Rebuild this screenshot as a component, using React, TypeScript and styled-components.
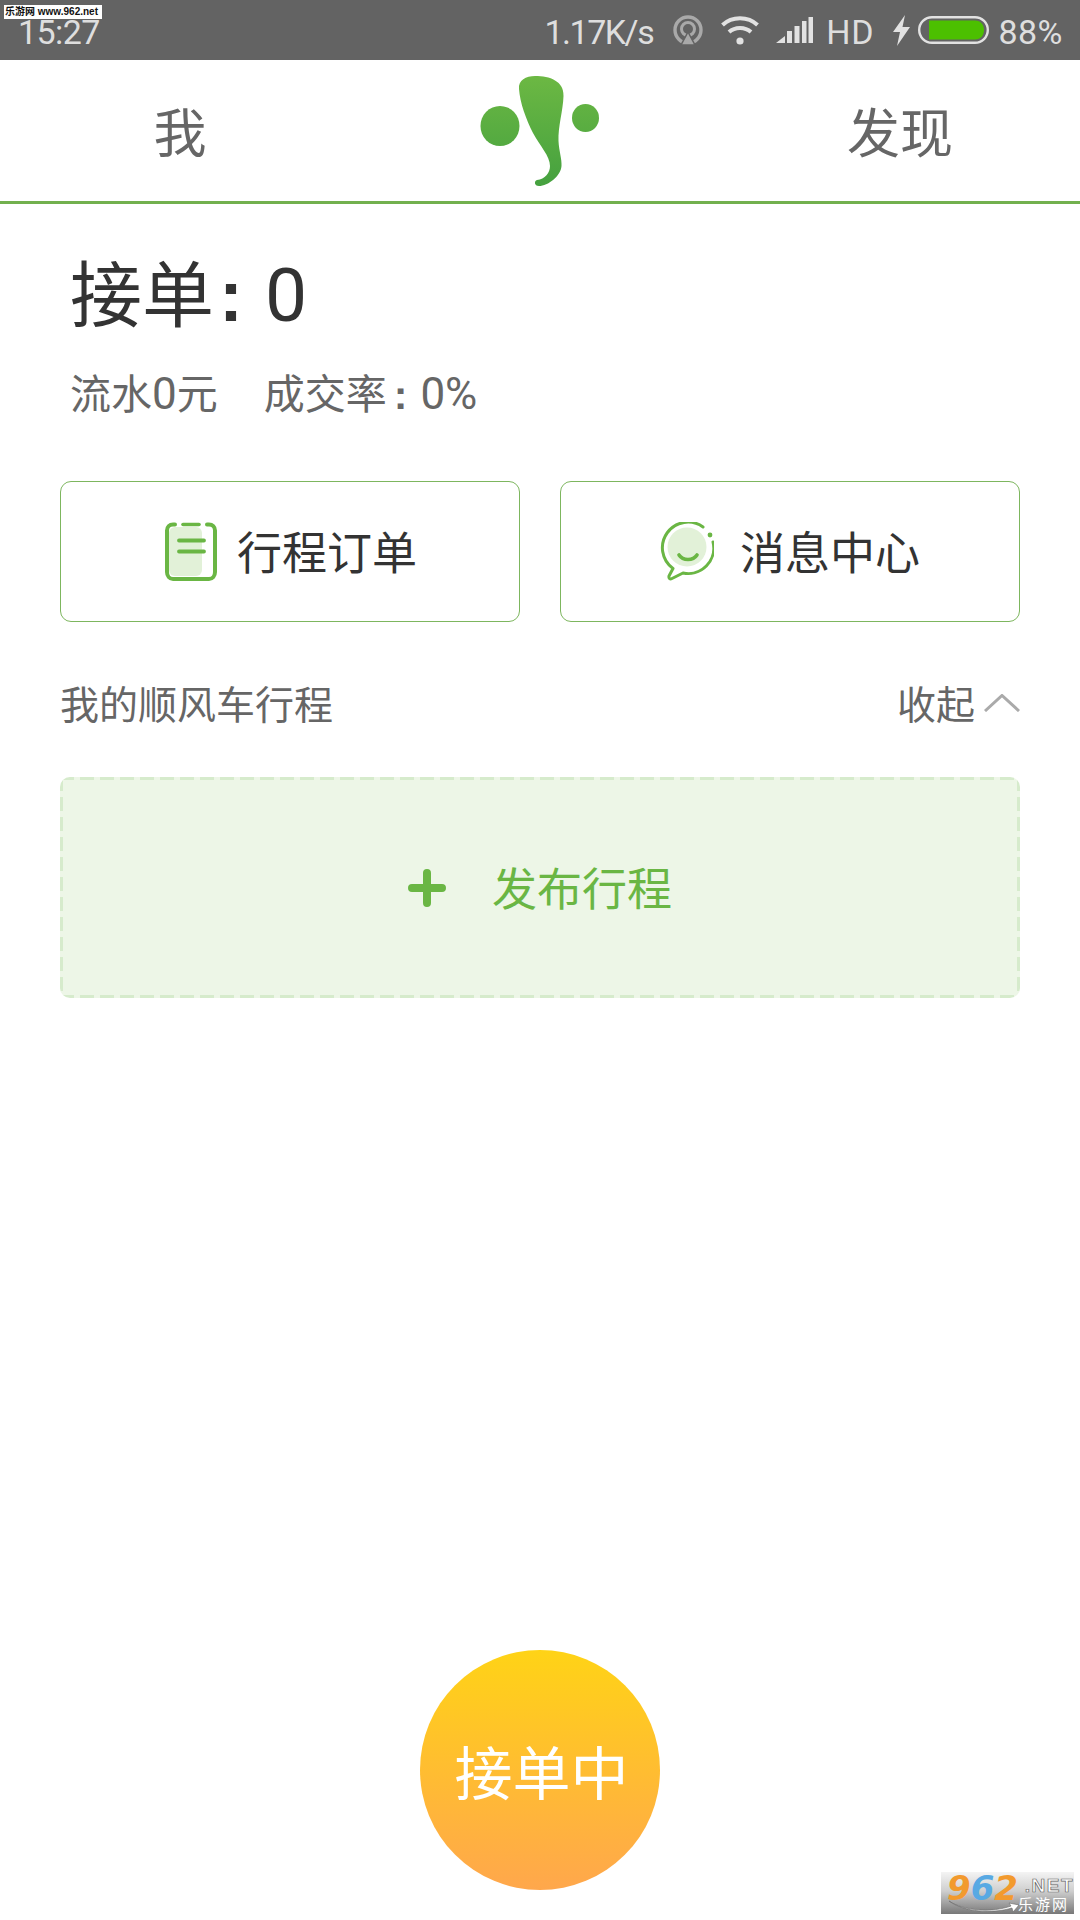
import React from "react";
import styled, { createGlobalStyle } from "styled-components";

const FONT = `Roboto, "Noto Sans CJK SC", sans-serif`;
const DASH = "#d6ebcc";

const Global = createGlobalStyle`
  html, body { margin: 0; padding: 0; background: #fff; }
  #root { width: 1080px; height: 1920px; }
  * { box-sizing: border-box; }
`;

const Page = styled.div`
  position: relative;
  width: 1080px;
  height: 1920px;
  display: flex;
  flex-direction: column;
  font-family: ${FONT};
  background: #fff;
  overflow: hidden;
`;

const StatusBar = styled.div`
  height: 60px;
  background: #636363;
  display: flex;
  align-items: center;
  padding: 0 17px 0 18px;
  color: #dedede;
  font-size: 34px;
`;
const StatusTime = styled.span`
  line-height: 60px;
  margin-top: 4px;
  letter-spacing: -0.6px;
`;
const StatusRight = styled.div`
  margin-left: auto;
  display: flex;
  align-items: center;
  height: 60px;
`;
const StatusText = styled.span<{ $gap?: number; $track?: number }>`
  margin-left: ${(p) => p.$gap ?? 0}px;
  letter-spacing: ${(p) => p.$track ?? 0}px;
  line-height: 60px;
  margin-top: 4px;
`;
const StatusIcon = styled.svg<{ $gap: number }>`
  display: block;
  margin-left: ${(p) => p.$gap}px;
  flex: none;
`;

const SiteStamp = styled.div`
  position: absolute;
  left: 4px;
  top: 5px;
  width: 98px;
  height: 14px;
  background: #fff;
  color: #111;
  font-size: 10px;
  line-height: 14px;
  padding-left: 1px;
  white-space: nowrap;
  font-family: "Liberation Sans", "Noto Sans CJK SC", sans-serif;
  font-weight: 700;
`;

const Header = styled.header`
  height: 144px;
  display: grid;
  grid-template-columns: 360px 360px 360px;
  align-items: center;
  border-bottom: 3px solid #72b04e;
`;
const Tab = styled.div`
  text-align: center;
  font-size: 53px;
  line-height: 131px;
  padding-top: 10px;
  color: #666;
`;
const Logo = styled.svg`
  display: block;
  margin: 0 auto;
`;

const Stats = styled.section`
  padding: 0 70px;
`;
const Orders = styled.div`
  margin-top: 41px;
  height: 100px;
  display: flex;
  align-items: baseline;
  font-size: 72px;
  line-height: 100px;
  color: #333;
`;
const Colon = styled.span<{ $before: number; $after: number }>`
  font-family: "Liberation Sans", sans-serif;
  font-weight: 700;
  margin-left: ${(p) => p.$before}px;
  margin-right: ${(p) => p.$after}px;
`;
const BigZero = styled.span`
  font-size: 75px;
`;
const Sub = styled.div`
  margin-top: 24px;
  height: 50px;
  display: flex;
  align-items: baseline;
  font-size: 41px;
  line-height: 50px;
  color: #666;
`;
const Num = styled.span`
  font-size: 44px;
`;
const SubItem = styled.span<{ $gap?: number }>`
  display: flex;
  align-items: baseline;
  margin-left: ${(p) => p.$gap ?? 0}px;
`;

const Actions = styled.div`
  margin-top: 62px;
  padding: 0 60px;
  display: grid;
  grid-template-columns: 460px 460px;
  gap: 40px;
`;
const ActionCard = styled.div<{ $gap: number }>`
  height: 141px;
  border: 1.5px solid #7db65e;
  border-radius: 11px;
  display: flex;
  align-items: center;
  justify-content: center;
  gap: ${(p) => p.$gap}px;
  font-size: 45px;
  color: #333;
`;
const Label = styled.span`
  margin-bottom: 2px;
`;

const SectionHead = styled.div`
  margin-top: 56px;
  padding: 0 60px;
  height: 50px;
  display: flex;
  align-items: center;
  font-size: 39px;
  color: #666;
`;
const Collapse = styled.div`
  margin-left: auto;
  display: flex;
  align-items: center;
  gap: 9px;
`;

const Publish = styled.div`
  margin: 49px 60px 0;
  height: 221px;
  border-radius: 10px;
  background:
    repeating-linear-gradient(90deg, ${DASH} 0 14px, transparent 14px 20px) top / 100% 3px no-repeat,
    repeating-linear-gradient(90deg, ${DASH} 0 14px, transparent 14px 20px) bottom / 100% 3px no-repeat,
    repeating-linear-gradient(180deg, ${DASH} 0 14px, transparent 14px 20px) left / 3px 100% no-repeat,
    repeating-linear-gradient(180deg, ${DASH} 0 14px, transparent 14px 20px) right / 3px 100% no-repeat,
    #edf6e7;
  display: flex;
  align-items: center;
  justify-content: center;
  gap: 46px;
  font-size: 45px;
  color: #6ab644;
`;

const Bottom = styled.div`
  margin-top: auto;
  padding-bottom: 30px;
  display: flex;
  justify-content: center;
`;
const GoButton = styled.div`
  width: 240px;
  height: 240px;
  padding-left: 3px;
  border-radius: 50%;
  background: linear-gradient(180deg, #ffd316 0%, #ffa74c 100%);
  color: #fff;
  font-size: 58px;
  display: flex;
  align-items: center;
  justify-content: center;
`;

const Badge = styled.div`
  position: absolute;
  right: 6px;
  bottom: 6px;
  width: 133px;
  height: 42px;
  background: linear-gradient(180deg, #f4f4f4 0%, #cfcfcf 45%, #787878 100%);
`;
const BadgeNum = styled.span`
  position: absolute;
  left: 6px;
  top: 0;
  font-family: "DejaVu Sans", sans-serif;
  font-style: italic;
  font-weight: 700;
  font-size: 34px;
  line-height: 32px;
  color: #f29a2e;
`;
const BadgeBlue = styled.span`
  color: #58a9e3;
`;
const BadgeNet = styled.span`
  position: absolute;
  right: 0;
  top: 4px;
  font-family: "Liberation Sans", sans-serif;
  font-weight: 700;
  font-size: 19px;
  line-height: 20px;
  color: #fff;
  letter-spacing: 1.5px;
  -webkit-text-stroke: 0.7px #666;
`;
const BadgeCn = styled.span`
  position: absolute;
  right: 5px;
  bottom: 0;
  font-size: 15px;
  line-height: 18px;
  color: #fff;
  letter-spacing: 2px;
`;
const BadgeWave = styled.svg`
  position: absolute;
  left: 7px;
  bottom: 1px;
`;

const GREEN = "#6ab644";

const CastIcon = () => (
  <StatusIcon $gap={20} width="30" height="30" viewBox="0 0 30 30" fill="none">
    <circle cx="15" cy="15" r="13" stroke="#a9a9a9" strokeWidth="3.4" />
    <circle cx="15" cy="14" r="6.5" stroke="#a9a9a9" strokeWidth="3" />
    <path d="M15 17L22 30H8Z" fill="#a9a9a9" stroke="#636363" strokeWidth="1.5" />
  </StatusIcon>
);
const WifiIcon = () => (
  <StatusIcon $gap={18} width="38" height="30" viewBox="0 0 38 30" fill="none">
    <path d="M1.5 10C11 1 27 1 36.5 10" stroke="#e2e2e2" strokeWidth="4" />
    <path d="M8 17C14 11.5 24 11.5 30 17" stroke="#e2e2e2" strokeWidth="4" />
    <circle cx="19" cy="26" r="3.6" fill="#e2e2e2" />
  </StatusIcon>
);
const SignalIcon = () => (
  <StatusIcon $gap={17} width="37" height="28" viewBox="0 0 37 28" fill="#e2e2e2">
    <path d="M0 27L9 20V27Z" />
    <rect x="11" y="15" width="5" height="12" />
    <rect x="18.5" y="10" width="5" height="17" />
    <rect x="26" y="5" width="4.5" height="22" />
    <rect x="32.5" y="1" width="4.5" height="26" />
  </StatusIcon>
);
const BoltIcon = () => (
  <StatusIcon $gap={19} width="17" height="31" viewBox="0 0 17 31" fill="#e2e2e2">
    <path d="M12 0L0 17H7L4 31L17 12H9.5Z" />
  </StatusIcon>
);
const BatteryIcon = () => (
  <StatusIcon $gap={8} width="71" height="28" viewBox="0 0 71 28" fill="none">
    <rect x="1.2" y="1.2" width="68.6" height="25.6" rx="12.8" stroke="#e2e2e2" strokeWidth="2.4" />
    <path d="M11 4.5H57C63 4.5 66 9 66 14C66 19 63 23.5 57 23.5H11Z" fill="#4cc000" />
  </StatusIcon>
);

const LogoMark = () => (
  <Logo width="120" height="116" viewBox="480 72 120 116">
    <defs>
      <linearGradient id="logoGrad" gradientUnits="userSpaceOnUse" x1="0" y1="75" x2="0" y2="185">
        <stop offset="0" stopColor="#6cb843" />
        <stop offset="1" stopColor="#45a13f" />
      </linearGradient>
    </defs>
    <ellipse cx="500" cy="125" rx="19.5" ry="20" fill="url(#logoGrad)" />
    <ellipse cx="585.5" cy="117" rx="13.5" ry="14" fill="url(#logoGrad)" />
    <path
      d="M519 88C518 79 526 75 535 75C550 75 564 80 563.5 95C563 110 558 125 558.5 140C559 150 562 158 561.5 165C561 175 548 185 539 185C534 185 534 180 537 179C545 178 550 172 550 165C550 155 540 145 533 132C526 118 520 102 519 88Z"
      fill="url(#logoGrad)"
    />
  </Logo>
);

const OrderIcon = () => (
  <svg width="54" height="60" viewBox="-2 0 54 60" fill="none">
    <rect x="4" y="5" width="33" height="49" rx="6" fill="#e2f1d8" />
    <path
      d="M10 2.5H8C4.5 2.5 2 5 2 8.5V50C2 54 4.5 57 8 57H44C47.5 57 50 54 50 50V8.5C50 5 47.5 2.5 44 2.5H42"
      stroke={GREEN}
      strokeWidth="4"
      strokeLinecap="round"
    />
    <path d="M18 2.5H34" stroke={GREEN} strokeWidth="3.6" strokeLinecap="round" />
    <path d="M14 18.5H39M14 29.5H39" stroke={GREEN} strokeWidth="3.8" strokeLinecap="round" />
  </svg>
);

const ChatIcon = () => (
  <svg width="54" height="60" viewBox="-2 0 54 60" fill="none">
    <circle cx="25" cy="25" r="19.5" fill="#e2f1d8" />
    <path
      d="M41 5A25.5 25.5 0 0 0 11 46.5L7 54C6.5 56.5 8 57.5 10 56.5L21 51A25.5 25.5 0 0 0 51 20"
      stroke={GREEN}
      strokeWidth="3"
      strokeLinecap="round"
      strokeLinejoin="round"
    />
    <circle cx="48" cy="13" r="2.4" fill={GREEN} />
    <path d="M17 33C21 39 31 39 35 33" stroke={GREEN} strokeWidth="3.6" strokeLinecap="round" />
  </svg>
);

const ChevronUp = () => (
  <svg width="36" height="18" viewBox="0 0 36 18" fill="none">
    <path d="M1 17L18 1.5L35 17" stroke="#aaa" strokeWidth="3" />
  </svg>
);

const PlusIcon = () => (
  <svg width="38" height="38" viewBox="0 0 38 38" fill="none">
    <path d="M4 19H34M19 4V34" stroke={GREEN} strokeWidth="8" strokeLinecap="round" />
  </svg>
);

export default function App() {
  return (
    <Page>
      <Global />
      <StatusBar>
        <StatusTime>15:27</StatusTime>
        <StatusRight>
          <StatusText $track={-1.5}>1.17K/s</StatusText>
          <CastIcon />
          <WifiIcon />
          <SignalIcon />
          <StatusText $gap={13} $track={0.8}>HD</StatusText>
          <BoltIcon />
          <BatteryIcon />
          <StatusText $gap={9} $track={0.5}>88%</StatusText>
        </StatusRight>
      </StatusBar>
      <SiteStamp>乐游网 www.962.net</SiteStamp>
      <Header>
        <Tab>我</Tab>
        <LogoMark />
        <Tab>发现</Tab>
      </Header>
      <Stats>
        <Orders>
          <span>接单</span>
          <Colon $before={5} $after={22}>:</Colon>
          <BigZero>0</BigZero>
        </Orders>
        <Sub>
          <SubItem>
            流水<Num>0</Num>元
          </SubItem>
          <SubItem $gap={46}>
            成交率
            <Colon $before={7} $after={13}>:</Colon>
            <Num>0%</Num>
          </SubItem>
        </Sub>
      </Stats>
      <Actions>
        <ActionCard $gap={20}>
          <OrderIcon />
          <Label>行程订单</Label>
        </ActionCard>
        <ActionCard $gap={26}>
          <ChatIcon />
          <Label>消息中心</Label>
        </ActionCard>
      </Actions>
      <SectionHead>
        <Label>我的顺风车行程</Label>
        <Collapse>
          <Label>收起</Label>
          <ChevronUp />
        </Collapse>
      </SectionHead>
      <Publish>
        <PlusIcon />
        <Label>发布行程</Label>
      </Publish>
      <Bottom>
        <GoButton>接单中</GoButton>
      </Bottom>
      <Badge>
        <BadgeNum>
          9<BadgeBlue>6</BadgeBlue>2
        </BadgeNum>
        <BadgeNet>.NET</BadgeNet>
        <BadgeWave width="72" height="13" viewBox="0 0 72 13" fill="none">
          <path d="M1 1C16 11 44 13 63 6L61 3L71 5L65 12L64 8C44 14 16 12 1 1Z" fill="#fff" stroke="#666" strokeWidth="0.6" />
        </BadgeWave>
        <BadgeCn>乐游网</BadgeCn>
      </Badge>
    </Page>
  );
}
